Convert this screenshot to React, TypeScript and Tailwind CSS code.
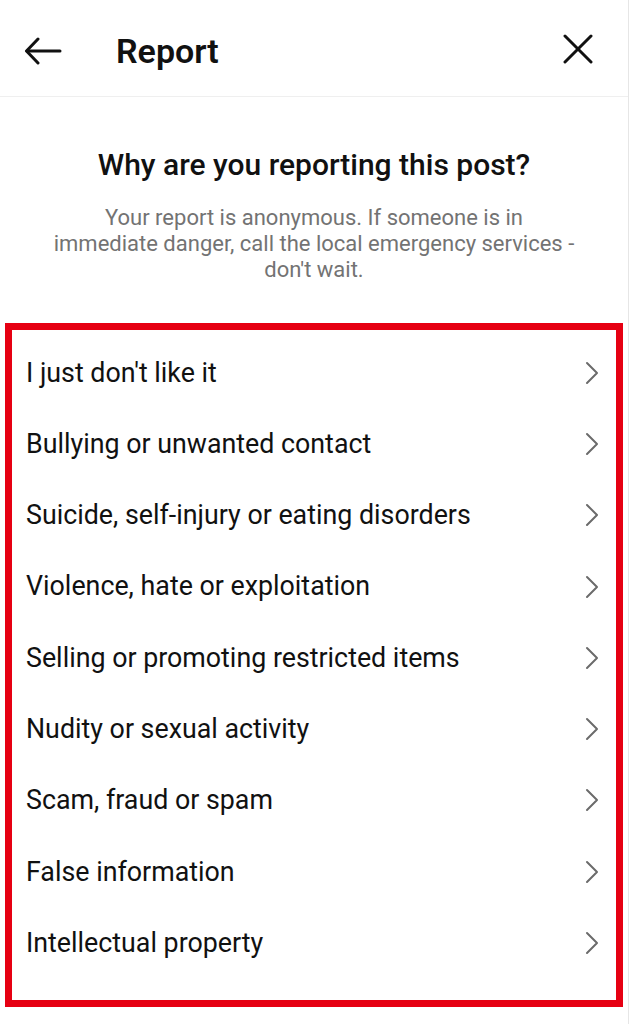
import React from "react";

const reasons = [
  "I just don't like it",
  "Bullying or unwanted contact",
  "Suicide, self-injury or eating disorders",
  "Violence, hate or exploitation",
  "Selling or promoting restricted items",
  "Nudity or sexual activity",
  "Scam, fraud or spam",
  "False information",
  "Intellectual property",
];

function BackArrow() {
  return (
    <svg width="38" height="28" viewBox="0 0 38 28" fill="none" stroke="#111" strokeWidth="3" strokeLinecap="round" strokeLinejoin="round">
      <path d="M36 14H3" />
      <path d="M14 2L2.5 14L14 26" />
    </svg>
  );
}

function CloseIcon() {
  return (
    <svg width="30" height="30" viewBox="0 0 30 30" fill="none" stroke="#111" strokeWidth="3" strokeLinecap="round">
      <path d="M2 2L28 28" />
      <path d="M28 2L2 28" />
    </svg>
  );
}

function Chevron() {
  return (
    <svg width="14" height="24" viewBox="0 0 14 24" fill="none" stroke="#6b6b6b" strokeWidth="2" strokeLinecap="round" strokeLinejoin="round">
      <path d="M2 2L12 12L2 22" />
    </svg>
  );
}

export default function App() {
  return (
    <div className="w-[631px] h-[1024px] bg-white overflow-hidden" style={{ fontFamily: "Roboto, 'Noto Sans', sans-serif" }}>
      <div className="w-[629px] h-full border-r border-[#e6e6e6]">
        <header className="h-[97px] pt-[6px] flex items-center border-b border-[#efefef] text-[#111]">
          <div className="ml-[24px] w-[40px] flex items-center">
            <BackArrow />
          </div>
          <h1 className="ml-[52px] text-[34px] font-semibold leading-none">Report</h1>
          <div className="ml-auto mr-[35px] mb-[4px] flex items-center">
            <CloseIcon />
          </div>
        </header>

        <div className="pt-[50px] text-center">
          <h2 className="text-[30px] font-medium leading-[36px] text-[#111]">Why are you reporting this post?</h2>
          <p className="mt-[22px] text-[22px] leading-[26px] text-[#737373] whitespace-nowrap">
            Your report is anonymous. If someone is in
            <br />
            immediate danger, call the local emergency services -
            <br />
            don't wait.
          </p>
        </div>

        <div className="ml-[5px] mt-[40px] w-[618px] h-[684px] border-[7px] border-[#e60012] pt-[7px]">
          <ul>
            {reasons.map((r) => (
              <li key={r} className="h-[71.3px] flex items-center justify-between pl-[14px] pr-[17px]">
                <span className="text-[26.8px] text-[#111]">{r}</span>
                <Chevron />
              </li>
            ))}
          </ul>
        </div>
      </div>
    </div>
  );
}
